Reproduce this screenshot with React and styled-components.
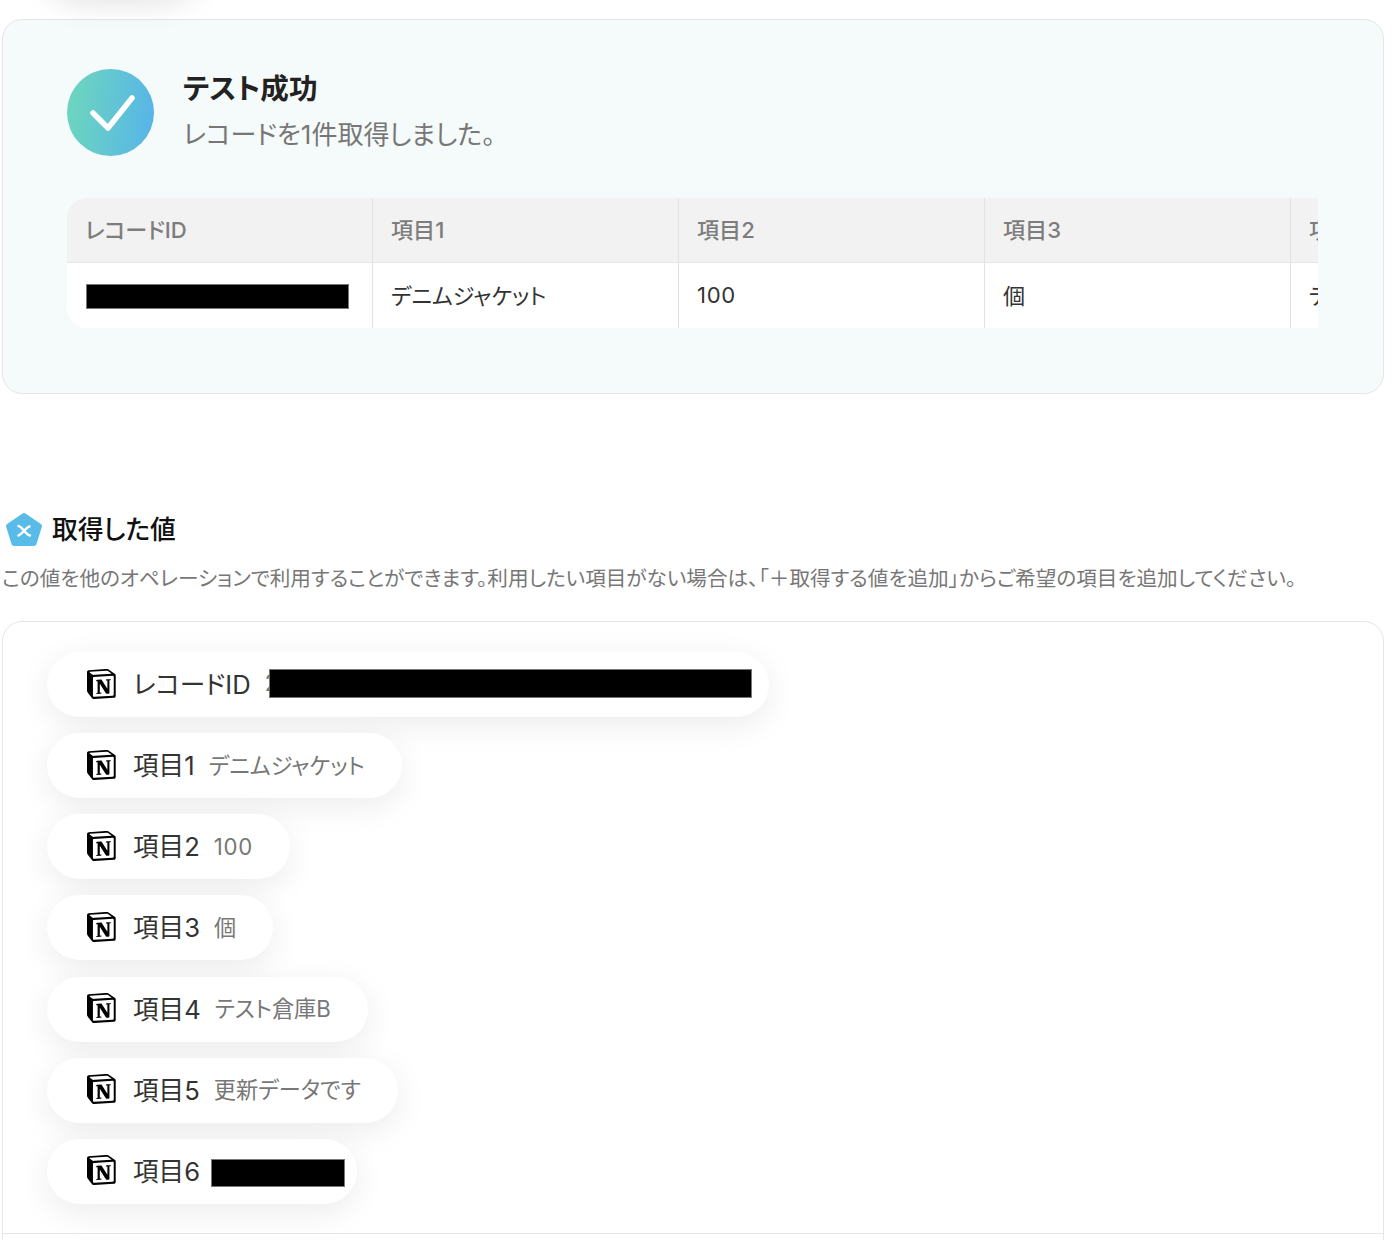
import React from 'react';
import styled, { createGlobalStyle } from 'styled-components';

const GlobalStyle = createGlobalStyle`
    html, body {
        margin: 0;
        padding: 0;
        background: #fff;
    }
    body {
        font-family: Inter, 'Noto Sans CJK JP', sans-serif;
        font-feature-settings: 'palt';
        color: #222;
    }
`;

const Page = styled.div`
    position: relative;
    width: 1394px;
    height: 1240px;
    overflow: hidden;
    padding: 19px 10px 0 2px;
    box-sizing: border-box;
`;

const CutOffPill = styled.div`
    position: absolute;
    top: -72px;
    left: 47px;
    width: 150px;
    height: 65px;
    border-radius: 33px;
    box-shadow: 0 8px 32px rgba(0, 0, 0, 0.13);
`;

const ResultCard = styled.section`
    height: 375px;
    box-sizing: border-box;
    padding: 49px 65px 0 64px;
    background: #f5fafa;
    border: 1px solid #e6e6e6;
    border-radius: 20px;
`;

const ResultHead = styled.div`
    display: flex;
    align-items: center;
    gap: 29px;
    height: 87px;
`;

const ResultBody = styled.div`
    padding-bottom: 4px;
`;

const ResultTitle = styled.h2`
    margin: 0 0 10px;
    font-size: 28.6px;
    line-height: 38px;
    font-weight: 700;
    color: #222;
`;

const ResultText = styled.p`
    margin: 0;
    font-size: 26px;
    line-height: 34px;
    color: #777;
`;

const TableWrap = styled.div`
    margin-top: 42px;
    overflow: hidden;
    border-radius: 20px 0 0 20px;
    background: #fff;
`;

const Row = styled.div`
    display: flex;
    width: 1600px;
    height: 65px;
    background: ${props => (props.$head ? '#f2f2f2' : '#fff')};
    border-bottom: ${props => (props.$head ? '1px solid #e6e6e6' : 'none')};
    box-sizing: border-box;
`;

const Cell = styled.div`
    flex: 0 0 306px;
    box-sizing: border-box;
    display: flex;
    align-items: center;
    padding: 0 0 ${props => (props.$num ? 2 : 4)}px 18px;
    border-right: 1px solid #e2e2e2;
    font-size: 22.1px;
    font-weight: ${props => (props.$head ? 500 : 400)};
    letter-spacing: ${props => (props.$num ? '0.7px' : 'normal')};
    color: ${props => (props.$head ? '#7d7d7d' : '#333')};
    white-space: nowrap;
`;

const Redaction = styled.span`
    display: block;
    flex: none;
    width: ${props => props.$w}px;
    height: ${props => props.$h}px;
    margin-left: ${props => props.$ml || 0}px;
    margin-top: ${props => props.$mt || 0}px;
    background: #000;
    outline: 1px solid #777;
    outline-offset: -1px;
`;

const SectionHead = styled.div`
    display: flex;
    align-items: center;
    gap: 9px;
    margin-top: 118px;
    padding-left: 3px;
    height: 36px;
`;

const SectionTitle = styled.h3`
    margin: 0;
    font-size: 25.8px;
    line-height: 36px;
    font-weight: 500;
    color: #111;
`;

const SectionText = styled.p`
    margin: 17px 0 0;
    font-size: 20.64px;
    line-height: 28px;
    color: #777;
    white-space: nowrap;
`;

const ValueCard = styled.section`
    margin-top: 28px;
    height: 700px;
    box-sizing: border-box;
    padding-top: 30px;
    border: 1px solid #e6e6e6;
    border-radius: 20px;
`;

const PillList = styled.div`
    display: flex;
    flex-direction: column;
    align-items: flex-start;
    gap: 16.15px;
    height: 581px;
    padding-left: 44px;
    border-bottom: 1px solid #e6e6e6;
`;

const Pill = styled.div`
    display: inline-flex;
    align-items: center;
    height: 65px;
    box-sizing: border-box;
    padding: 0 ${props => props.$pr || 37}px 0 40px;
    background: #fff;
    border-radius: 33px;
    box-shadow: 0 8px 32px rgba(0, 0, 0, 0.08);
    white-space: nowrap;
`;

const PillLabel = styled.span`
    margin: 0 0 4px 16px;
    font-size: 25.6px;
    color: #333;
`;

const PillValue = styled.span`
    margin: 0 0 ${props => (props.$num ? 0 : 4)}px 14px;
    font-size: 22.2px;
    letter-spacing: ${props => (props.$num ? '0.7px' : 'normal')};
    color: #777;
`;

const NotionIcon = () => (
    <svg width='30' height='30' viewBox='0 0 100 100' style={{ flex: 'none', marginBottom: 2 }}>
        <path
            fill='#fff'
            d='M6.017 4.313l55.333 -4.087c6.797 -0.583 8.543 -0.19 12.817 2.917l17.663 12.443c2.913 2.14 3.883 2.723 3.883 5.053v68.243c0 4.277 -1.553 6.807 -6.99 7.193L24.467 99.967c-4.08 0.193 -6.023 -0.39 -8.16 -3.113L3.3 79.94c-2.333 -3.113 -3.3 -5.443 -3.3 -8.167V11.113c0 -3.497 1.553 -6.413 6.017 -6.8z'
        />
        <path
            fill='#000'
            fillRule='evenodd'
            d='M61.35 0.227l-55.333 4.087C1.553 4.7 0 7.617 0 11.113v60.66c0 2.723 0.967 5.053 3.3 8.167l13.007 16.913c2.137 2.723 4.08 3.307 8.16 3.113l64.257 -3.89c5.433 -0.387 6.99 -2.917 6.99 -7.193V20.64c0 -2.21 -0.873 -2.847 -3.443 -4.733L74.167 3.143c-4.273 -3.107 -6.02 -3.5 -12.817 -2.917zM25.92 19.523c-5.247 0.353 -6.437 0.433 -9.417 -1.99L8.927 11.507c-0.77 -0.78 -0.383 -1.753 1.557 -1.947l53.193 -3.887c4.467 -0.39 6.793 1.167 8.54 2.527l9.123 6.61c0.39 0.197 1.36 1.36 0.193 1.36l-54.933 3.307 -0.68 0.047zM19.803 88.3V30.367c0 -2.53 0.777 -3.697 3.103 -3.893L86 22.78c2.14 -0.193 3.107 1.167 3.107 3.693v57.547c0 2.53 -0.39 4.67 -3.883 4.863l-60.377 3.5c-3.493 0.193 -5.043 -0.97 -5.043 -3.5v-0.583zM79.4 33.6c0.387 1.75 0 3.5 -1.75 3.7l-2.91 0.577v42.773c-2.527 1.36 -4.853 2.137 -6.797 2.137 -3.107 0 -3.883 -0.973 -6.21 -3.887l-19.03 -29.94v28.967l6.02 1.363s0 3.5 -4.857 3.5l-13.39 0.777c-0.39 -0.78 0 -2.723 1.357 -3.11l3.497 -0.97v-38.3L30.48 40.667c-0.39 -1.75 0.58 -4.277 3.3 -4.473l14.367 -0.967 19.8 30.327v-26.83l-5.047 -0.58c-0.39 -2.143 1.163 -3.7 3.103 -3.89l13.4 -0.78z'
        />
    </svg>
);

const SuccessIcon = () => (
    <svg width='87' height='87' viewBox='0 0 87 87' style={{ flex: 'none' }}>
        <defs>
            <linearGradient id='successGrad' x1='0' y1='0.45' x2='1' y2='0.55'>
                <stop offset='0' stopColor='#6dd6bd' />
                <stop offset='1' stopColor='#58b5e8' />
            </linearGradient>
        </defs>
        <circle cx='43.5' cy='43.5' r='43.5' fill='url(#successGrad)' />
        <path
            d='M26 44 L41 59 L65 29'
            fill='none'
            stroke='#fff'
            strokeWidth='5.5'
            strokeLinecap='round'
            strokeLinejoin='round'
        />
    </svg>
);

const ValueIcon = () => (
    <svg width='38' height='36' viewBox='0 0 38 36' style={{ flex: 'none' }}>
        <path
            d='M19 3.5 L34.5 14 L29 31.5 L9 31.5 L3.5 14 Z'
            fill='#58bbe8'
            stroke='#58bbe8'
            strokeWidth='5'
            strokeLinejoin='round'
        />
        <path
            d='M13.5 14 C17 14.5 21 23 25 23.5 M24.5 14.5 C21 15 17 22.5 13.5 23.5'
            fill='none'
            stroke='#fff'
            strokeWidth='2.4'
            strokeLinecap='round'
        />
    </svg>
);

const columns = ['レコードID', '項目1', '項目2', '項目3', '項目4'];

const pills = [
    { label: '項目1', value: 'デニムジャケット' },
    { label: '項目2', value: '100', num: true },
    { label: '項目3', value: '個' },
    { label: '項目4', value: 'テスト倉庫B' },
    { label: '項目5', value: '更新データです' },
];

const App = () => (
    <>
        <GlobalStyle />
        <Page>
            <CutOffPill />
            <ResultCard>
                <ResultHead>
                    <SuccessIcon />
                    <ResultBody>
                        <ResultTitle>テスト成功</ResultTitle>
                        <ResultText>レコードを1件取得しました。</ResultText>
                    </ResultBody>
                </ResultHead>
                <TableWrap>
                    <Row $head>
                        {columns.map(name => (
                            <Cell $head key={name}>
                                {name}
                            </Cell>
                        ))}
                    </Row>
                    <Row>
                        <Cell>
                            <Redaction $w={263} $h={25} $ml={1} $mt={6} />
                        </Cell>
                        <Cell>デニムジャケット</Cell>
                        <Cell $num>100</Cell>
                        <Cell>個</Cell>
                        <Cell>テスト倉庫B</Cell>
                    </Row>
                </TableWrap>
            </ResultCard>

            <SectionHead>
                <ValueIcon />
                <SectionTitle>取得した値</SectionTitle>
            </SectionHead>
            <SectionText>
                この値を他のオペレーションで利用することができます。利用したい項目がない場合は、「＋取得する値を追加」からご希望の項目を追加してください。
            </SectionText>

            <ValueCard>
                <PillList>
                    <Pill $pr={17}>
                        <NotionIcon />
                        <PillLabel>レコードID</PillLabel>
                        <PillValue>2</PillValue>
                        <Redaction $w={483} $h={29} $ml={-9} $mt={-2} />
                    </Pill>
                    {pills.map(pill => (
                        <Pill key={pill.label}>
                            <NotionIcon />
                            <PillLabel>{pill.label}</PillLabel>
                            <PillValue $num={pill.num}>{pill.value}</PillValue>
                        </Pill>
                    ))}
                    <Pill $pr={12}>
                        <NotionIcon />
                        <PillLabel>項目6</PillLabel>
                        <Redaction $w={134} $h={28} $ml={11} $mt={4} />
                    </Pill>
                </PillList>
            </ValueCard>
        </Page>
    </>
);

export default App;
